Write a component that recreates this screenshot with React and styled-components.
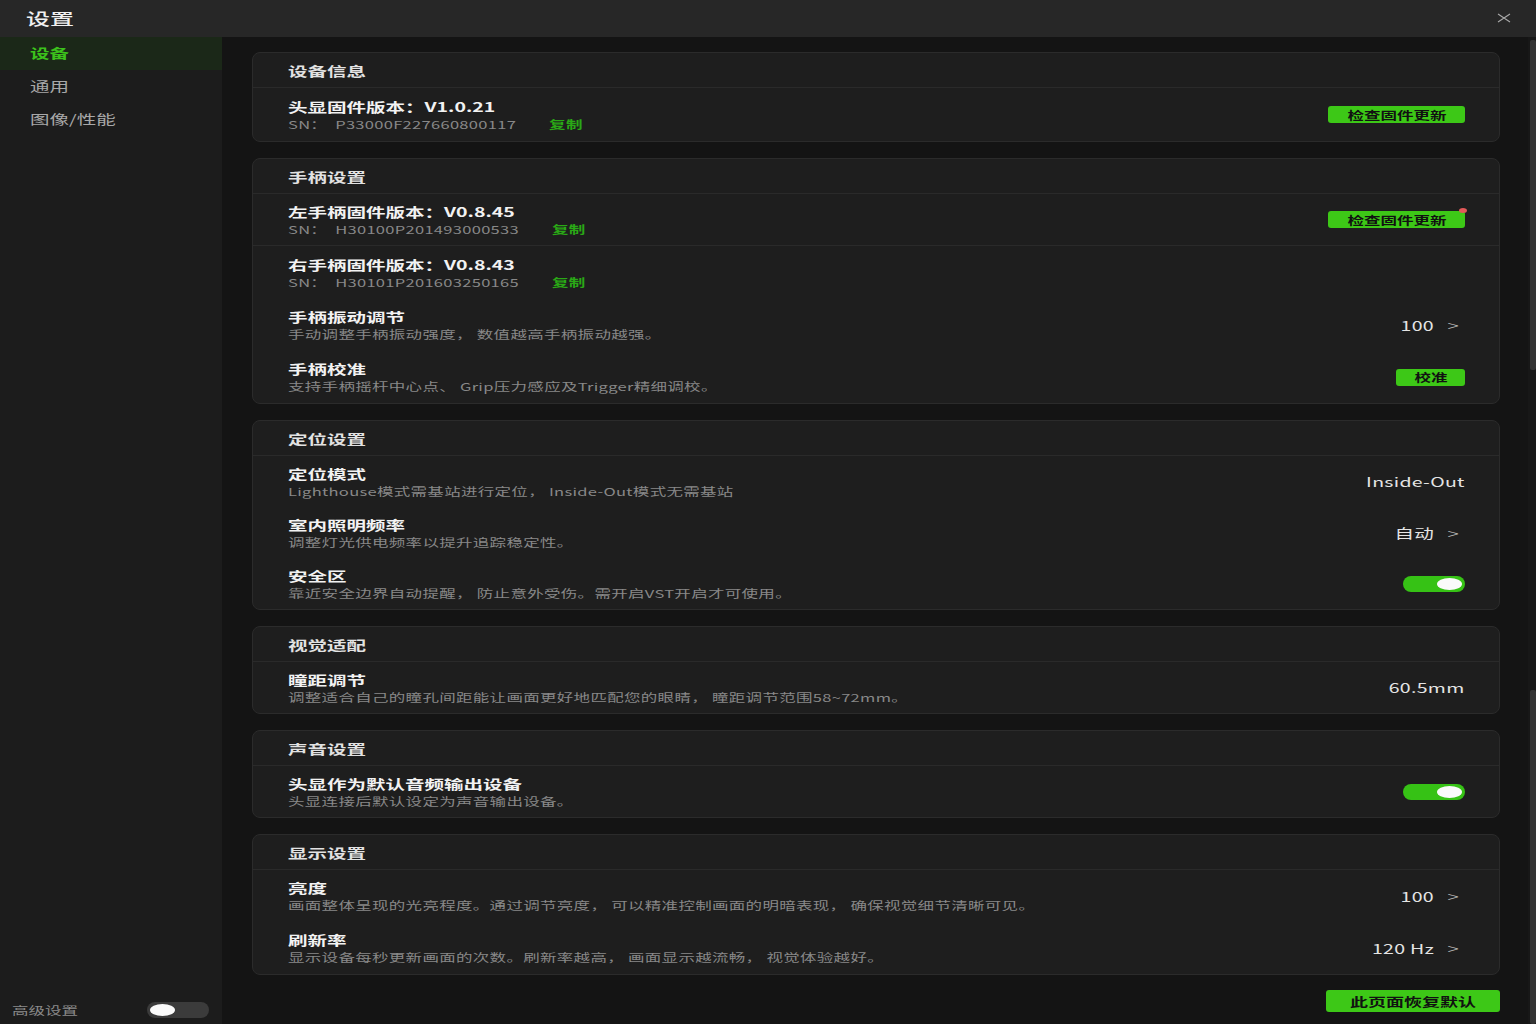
import React from "react";
import styled, { createGlobalStyle, css } from "styled-components";

const GlobalStyle = createGlobalStyle`
  html, body { margin: 0; padding: 0; background: #141414; }
  body { font-family: "Noto Sans CJK SC", "Noto Sans", sans-serif; }
  * { box-sizing: border-box; }
`;

const stretch = (origin = "left") => css`
  display: inline-block;
  white-space: nowrap;
  transform: scaleX(1.5);
  transform-origin: ${origin} center;
`;

const Window = styled.div`
  width: 1536px;
  height: 1024px;
  display: flex;
  flex-direction: column;
  overflow: hidden;
  background: #141414;
`;

const TitleBar = styled.div`
  height: 37px;
  flex-shrink: 0;
  background: #272727;
  display: flex;
  align-items: center;
  justify-content: space-between;
  padding: 0 24px 2px 26px;
`;

const WindowTitle = styled.span`
  ${stretch()};
  font-size: 16px;
  font-weight: 500;
  color: #f0f0f0;
`;

const CloseBtn = styled.div`
  width: 16px;
  height: 12px;
  display: flex;
  align-items: center;
  justify-content: center;
  cursor: pointer;
`;

const Body = styled.div`
  flex: 1;
  display: flex;
  min-height: 0;
`;

const Sidebar = styled.div`
  width: 222px;
  flex-shrink: 0;
  background: #1c1c1c;
  display: flex;
  flex-direction: column;
`;

const NavItem = styled.div`
  height: 33px;
  display: flex;
  align-items: center;
  padding: 0 0 2px 30px;
  background: ${(p) => (p.$active ? "#1b2818" : "transparent")};
  cursor: pointer;
`;

const NavText = styled.span`
  ${stretch()};
  font-size: 13px;
  font-weight: ${(p) => (p.$active ? 700 : 400)};
  color: ${(p) => (p.$active ? "#3cc21c" : "#a8a8a8")};
`;

const SideFooter = styled.div`
  margin-top: auto;
  height: 28px;
  display: flex;
  align-items: center;
  justify-content: space-between;
  padding: 0 13px 0 12px;
`;

const FooterText = styled.span`
  ${stretch()};
  font-size: 11px;
  color: #8a8a8a;
`;

const Main = styled.div`
  flex: 1;
  display: flex;
  flex-direction: column;
  gap: 16px;
  padding: 15px 28px 0 30px;
`;

const Card = styled.div`
  background: #1e1e1e;
  border: 1px solid #2b2b2b;
  border-radius: 8px;
  display: flex;
  flex-direction: column;
`;

const CardHeader = styled.div`
  height: 35px;
  display: flex;
  align-items: center;
  padding-left: 35px;
  border-bottom: 1px solid #2a2a2a;
`;

const HeaderText = styled.span`
  ${stretch()};
  font-size: 13px;
  font-weight: 700;
  color: #e2e2e2;
`;

const Row = styled.div`
  height: ${(p) => p.$h || 51}px;
  display: flex;
  align-items: center;
  justify-content: space-between;
  padding: 0 34px 0 35px;
  border-bottom: ${(p) => (p.$divider ? "1px solid #2a2a2a" : "none")};
`;

const TextCol = styled.div`
  display: flex;
  flex-direction: column;
`;

const RowTitle = styled.span`
  ${stretch()};
  font-size: 13px;
  line-height: 18px;
  font-weight: 700;
  color: #f2f2f2;
`;

const RowSub = styled.span`
  ${stretch()};
  font-size: 11px;
  line-height: 16px;
  letter-spacing: 0.2px;
  color: #888;
`;

const Copy = styled.span`
  margin-left: 22px;
  color: #2aa816;
  font-weight: 700;
  cursor: pointer;
`;

const Value = styled.span`
  ${stretch("right")};
  font-size: 13px;
  letter-spacing: 0.2px;
  color: #e4e4e4;
  display: inline-flex;
  align-items: center;
  padding-right: ${(p) => (p.$arrow ? 4 : 0)}px;
`;

const Chevron = styled.span`
  margin-left: 9px;
  font-size: 14px;
  font-weight: 300;
  color: #c4c4c4;
`;

const GreenButton = styled.button`
  position: relative;
  width: ${(p) => p.$w}px;
  height: ${(p) => p.$hh || 17}px;
  border: none;
  border-radius: 3px;
  background: #3dc817;
  display: flex;
  align-items: center;
  justify-content: center;
  padding: 0;
  cursor: pointer;
  font-family: inherit;
`;

const ButtonText = styled.span`
  ${stretch("center")};
  font-size: ${(p) => p.$fs || 11}px;
  font-weight: 700;
  color: #111;
`;

const Dot = styled.span`
  position: absolute;
  top: -3px;
  right: -2px;
  width: 8px;
  height: 5px;
  border-radius: 50%;
  background: #e25a5a;
`;

const Track = styled.div`
  width: 62px;
  height: 16px;
  border-radius: 8px;
  background: ${(p) => (p.$on ? "#36c215" : "#3b3b3b")};
  display: flex;
  align-items: center;
  justify-content: ${(p) => (p.$on ? "flex-end" : "flex-start")};
  padding: 0 3px;
  cursor: pointer;
`;

const Knob = styled.div`
  width: 25px;
  height: 12px;
  border-radius: 50%;
  background: #fafafa;
`;

const Footer = styled.div`
  display: flex;
  justify-content: flex-end;
  margin-top: -1px;
`;

const ScrollTrack = styled.div`
  width: 8px;
  flex-shrink: 0;
  background: #171717;
  display: flex;
  flex-direction: column;
  justify-content: space-between;
  padding-top: 3px;
`;

const Thumb = styled.div`
  width: 6px;
  margin-left: 2px;
  height: ${(p) => p.$h}px;
  background: #333;
  border-radius: 2px;
`;

const Toggle = ({ on }) => (
  <Track $on={on}>
    <Knob />
  </Track>
);

const Sn = ({ sn }) => (
  <RowSub>
    SN：&nbsp; {sn}
    <Copy>复制</Copy>
  </RowSub>
);

const Arrow = ({ children }) => (
  <Value $arrow>
    {children}
    <Chevron>&gt;</Chevron>
  </Value>
);

export default function App() {
  return (
    <>
      <GlobalStyle />
      <Window>
        <TitleBar>
          <WindowTitle>设置</WindowTitle>
          <CloseBtn>
            <svg width="14" height="10" viewBox="0 0 14 10">
              <path d="M1 1 L13 9 M13 1 L1 9" stroke="#a9a9a9" strokeWidth="1.1" fill="none" />
            </svg>
          </CloseBtn>
        </TitleBar>
        <Body>
          <Sidebar>
            <NavItem $active>
              <NavText $active>设备</NavText>
            </NavItem>
            <NavItem>
              <NavText>通用</NavText>
            </NavItem>
            <NavItem>
              <NavText>图像/性能</NavText>
            </NavItem>
            <SideFooter>
              <FooterText>高级设置</FooterText>
              <Toggle on={false} />
            </SideFooter>
          </Sidebar>

          <Main>
            <Card>
              <CardHeader>
                <HeaderText>设备信息</HeaderText>
              </CardHeader>
              <Row $h={53}>
                <TextCol>
                  <RowTitle>头显固件版本：V1.0.21</RowTitle>
                  <Sn sn="P33000F227660800117" />
                </TextCol>
                <GreenButton $w={137}>
                  <ButtonText>检查固件更新</ButtonText>
                </GreenButton>
              </Row>
            </Card>

            <Card>
              <CardHeader>
                <HeaderText>手柄设置</HeaderText>
              </CardHeader>
              <Row $h={52} $divider>
                <TextCol>
                  <RowTitle>左手柄固件版本：V0.8.45</RowTitle>
                  <Sn sn="H30100P201493000533" />
                </TextCol>
                <GreenButton $w={137}>
                  <ButtonText>检查固件更新</ButtonText>
                  <Dot />
                </GreenButton>
              </Row>
              <Row $h={53}>
                <TextCol>
                  <RowTitle>右手柄固件版本：V0.8.43</RowTitle>
                  <Sn sn="H30101P201603250165" />
                </TextCol>
              </Row>
              <Row $h={52}>
                <TextCol>
                  <RowTitle>手柄振动调节</RowTitle>
                  <RowSub>手动调整手柄振动强度， 数值越高手柄振动越强。</RowSub>
                </TextCol>
                <Arrow>100</Arrow>
              </Row>
              <Row $h={52}>
                <TextCol>
                  <RowTitle>手柄校准</RowTitle>
                  <RowSub>支持手柄摇杆中心点、 Grip压力感应及Trigger精细调校。</RowSub>
                </TextCol>
                <GreenButton $w={69}>
                  <ButtonText>校准</ButtonText>
                </GreenButton>
              </Row>
            </Card>

            <Card>
              <CardHeader>
                <HeaderText>定位设置</HeaderText>
              </CardHeader>
              <Row>
                <TextCol>
                  <RowTitle>定位模式</RowTitle>
                  <RowSub>Lighthouse模式需基站进行定位， Inside-Out模式无需基站</RowSub>
                </TextCol>
                <Value>Inside-Out</Value>
              </Row>
              <Row>
                <TextCol>
                  <RowTitle>室内照明频率</RowTitle>
                  <RowSub>调整灯光供电频率以提升追踪稳定性。</RowSub>
                </TextCol>
                <Arrow>自动</Arrow>
              </Row>
              <Row>
                <TextCol>
                  <RowTitle>安全区</RowTitle>
                  <RowSub>靠近安全边界自动提醒， 防止意外受伤。需开启VST开启才可使用。</RowSub>
                </TextCol>
                <Toggle on />
              </Row>
            </Card>

            <Card>
              <CardHeader>
                <HeaderText>视觉适配</HeaderText>
              </CardHeader>
              <Row>
                <TextCol>
                  <RowTitle>瞳距调节</RowTitle>
                  <RowSub>调整适合自己的瞳孔间距能让画面更好地匹配您的眼睛， 瞳距调节范围58~72mm。</RowSub>
                </TextCol>
                <Value>60.5mm</Value>
              </Row>
            </Card>

            <Card>
              <CardHeader>
                <HeaderText>声音设置</HeaderText>
              </CardHeader>
              <Row>
                <TextCol>
                  <RowTitle>头显作为默认音频输出设备</RowTitle>
                  <RowSub>头显连接后默认设定为声音输出设备。</RowSub>
                </TextCol>
                <Toggle on />
              </Row>
            </Card>

            <Card>
              <CardHeader>
                <HeaderText>显示设置</HeaderText>
              </CardHeader>
              <Row $h={52}>
                <TextCol>
                  <RowTitle>亮度</RowTitle>
                  <RowSub>画面整体呈现的光亮程度。通过调节亮度， 可以精准控制画面的明暗表现， 确保视觉细节清晰可见。</RowSub>
                </TextCol>
                <Arrow>100</Arrow>
              </Row>
              <Row $h={52}>
                <TextCol>
                  <RowTitle>刷新率</RowTitle>
                  <RowSub>显示设备每秒更新画面的次数。刷新率越高， 画面显示越流畅， 视觉体验越好。</RowSub>
                </TextCol>
                <Arrow>120 Hz</Arrow>
              </Row>
            </Card>

            <Footer>
              <GreenButton $w={174} $hh={22}>
                <ButtonText $fs={12}>此页面恢复默认</ButtonText>
              </GreenButton>
            </Footer>
          </Main>

          <ScrollTrack>
            <Thumb $h={330} />
            <Thumb $h={334} />
          </ScrollTrack>
        </Body>
      </Window>
    </>
  );
}
